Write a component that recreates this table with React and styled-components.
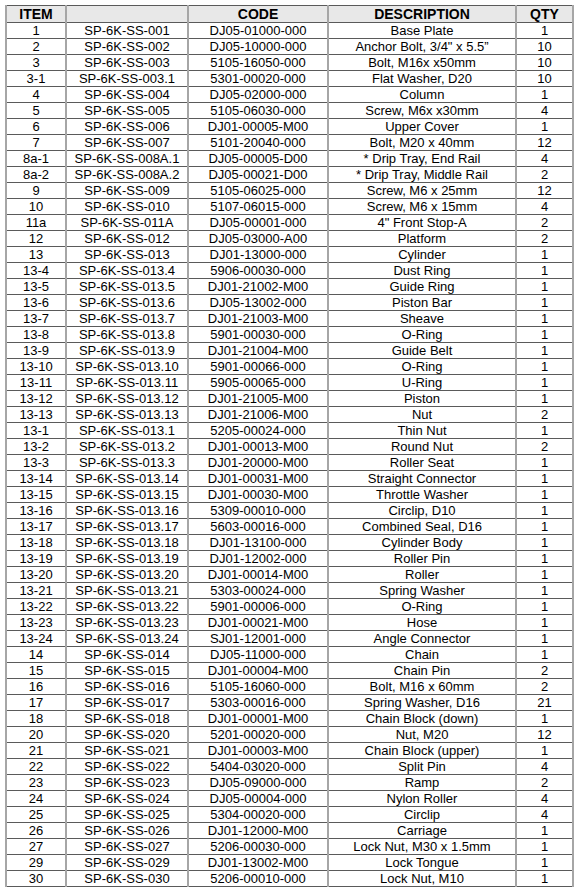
import React from "react";
import styled, { createGlobalStyle } from "styled-components";

const GlobalStyle = createGlobalStyle`
  html, body { margin: 0; padding: 0; background: #ffffff; }
  body { font-family: "Liberation Sans", Arial, Helvetica, sans-serif; color: #000; }
`;

const Page = styled.div`
  padding: 5px 0 0 5px;
`;

const Table = styled.table`
  border-collapse: collapse;
  table-layout: fixed;
  width: 567px;
`;

const Col = styled.col`
  width: ${(p) => p.$w}px;
`;

const HeadCell = styled.th`
  background: #e8e8e8;
  font-size: 14px;
  font-weight: 700;
  height: 16px;
  line-height: 16px;
  padding: 0;
  text-align: center;
  border-left: 2px solid #a6a6a6;
  border-right: 2px solid #a6a6a6;
  border-top: 1px solid #5a5a5a;
  border-bottom: 1px solid #5a5a5a;
  white-space: nowrap;
  overflow: hidden;
`;

const Cell = styled.td`
  font-size: 13px;
  height: 15px;
  line-height: 15px;
  padding: 0;
  text-align: center;
  border-left: 2px solid #a6a6a6;
  border-right: 2px solid #a6a6a6;
  border-top: 1px solid #5a5a5a;
  border-bottom: 1px solid #5a5a5a;
  white-space: nowrap;
  overflow: hidden;
`;

const rows = [
  ["1", "SP-6K-SS-001", "DJ05-01000-000", "Base Plate", "1"],
  ["2", "SP-6K-SS-002", "DJ05-10000-000", "Anchor Bolt, 3/4\" x 5.5\u201D", "10"],
  ["3", "SP-6K-SS-003", "5105-16050-000", "Bolt, M16x x50mm", "10"],
  ["3-1", "SP-6K-SS-003.1", "5301-00020-000", "Flat Washer, D20", "10"],
  ["4", "SP-6K-SS-004", "DJ05-02000-000", "Column", "1"],
  ["5", "SP-6K-SS-005", "5105-06030-000", "Screw, M6x x30mm", "4"],
  ["6", "SP-6K-SS-006", "DJ01-00005-M00", "Upper Cover", "1"],
  ["7", "SP-6K-SS-007", "5101-20040-000", "Bolt, M20 x 40mm", "12"],
  ["8a-1", "SP-6K-SS-008A.1", "DJ05-00005-D00", "* Drip Tray, End Rail", "4"],
  ["8a-2", "SP-6K-SS-008A.2", "DJ05-00021-D00", "* Drip Tray, Middle Rail", "2"],
  ["9", "SP-6K-SS-009", "5105-06025-000", "Screw, M6 x 25mm", "12"],
  ["10", "SP-6K-SS-010", "5107-06015-000", "Screw, M6 x 15mm", "4"],
  ["11a", "SP-6K-SS-011A", "DJ05-00001-000", "4\" Front Stop-A", "2"],
  ["12", "SP-6K-SS-012", "DJ05-03000-A00", "Platform", "2"],
  ["13", "SP-6K-SS-013", "DJ01-13000-000", "Cylinder", "1"],
  ["13-4", "SP-6K-SS-013.4", "5906-00030-000", "Dust Ring", "1"],
  ["13-5", "SP-6K-SS-013.5", "DJ01-21002-M00", "Guide Ring", "1"],
  ["13-6", "SP-6K-SS-013.6", "DJ05-13002-000", "Piston Bar", "1"],
  ["13-7", "SP-6K-SS-013.7", "DJ01-21003-M00", "Sheave", "1"],
  ["13-8", "SP-6K-SS-013.8", "5901-00030-000", "O-Ring", "1"],
  ["13-9", "SP-6K-SS-013.9", "DJ01-21004-M00", "Guide Belt", "1"],
  ["13-10", "SP-6K-SS-013.10", "5901-00066-000", "O-Ring", "1"],
  ["13-11", "SP-6K-SS-013.11", "5905-00065-000", "U-Ring", "1"],
  ["13-12", "SP-6K-SS-013.12", "DJ01-21005-M00", "Piston", "1"],
  ["13-13", "SP-6K-SS-013.13", "DJ01-21006-M00", "Nut", "2"],
  ["13-1", "SP-6K-SS-013.1", "5205-00024-000", "Thin Nut", "1"],
  ["13-2", "SP-6K-SS-013.2", "DJ01-00013-M00", "Round Nut", "2"],
  ["13-3", "SP-6K-SS-013.3", "DJ01-20000-M00", "Roller Seat", "1"],
  ["13-14", "SP-6K-SS-013.14", "DJ01-00031-M00", "Straight Connector", "1"],
  ["13-15", "SP-6K-SS-013.15", "DJ01-00030-M00", "Throttle Washer", "1"],
  ["13-16", "SP-6K-SS-013.16", "5309-00010-000", "Circlip, D10", "1"],
  ["13-17", "SP-6K-SS-013.17", "5603-00016-000", "Combined Seal, D16", "1"],
  ["13-18", "SP-6K-SS-013.18", "DJ01-13100-000", "Cylinder Body", "1"],
  ["13-19", "SP-6K-SS-013.19", "DJ01-12002-000", "Roller Pin", "1"],
  ["13-20", "SP-6K-SS-013.20", "DJ01-00014-M00", "Roller", "1"],
  ["13-21", "SP-6K-SS-013.21", "5303-00024-000", "Spring Washer", "1"],
  ["13-22", "SP-6K-SS-013.22", "5901-00006-000", "O-Ring", "1"],
  ["13-23", "SP-6K-SS-013.23", "DJ01-00021-M00", "Hose", "1"],
  ["13-24", "SP-6K-SS-013.24", "SJ01-12001-000", "Angle Connector", "1"],
  ["14", "SP-6K-SS-014", "DJ05-11000-000", "Chain", "1"],
  ["15", "SP-6K-SS-015", "DJ01-00004-M00", "Chain Pin", "2"],
  ["16", "SP-6K-SS-016", "5105-16060-000", "Bolt, M16 x 60mm", "2"],
  ["17", "SP-6K-SS-017", "5303-00016-000", "Spring Washer, D16", "21"],
  ["18", "SP-6K-SS-018", "DJ01-00001-M00", "Chain Block (down)", "1"],
  ["20", "SP-6K-SS-020", "5201-00020-000", "Nut, M20", "12"],
  ["21", "SP-6K-SS-021", "DJ01-00003-M00", "Chain Block (upper)", "1"],
  ["22", "SP-6K-SS-022", "5404-03020-000", "Split Pin", "4"],
  ["23", "SP-6K-SS-023", "DJ05-09000-000", "Ramp", "2"],
  ["24", "SP-6K-SS-024", "DJ05-00004-000", "Nylon Roller", "4"],
  ["25", "SP-6K-SS-025", "5304-00020-000", "Circlip", "4"],
  ["26", "SP-6K-SS-026", "DJ01-12000-M00", "Carriage", "1"],
  ["27", "SP-6K-SS-027", "5206-00030-000", "Lock Nut, M30 x 1.5mm", "1"],
  ["29", "SP-6K-SS-029", "DJ01-13002-M00", "Lock Tongue", "1"],
  ["30", "SP-6K-SS-030", "5206-00010-000", "Lock Nut, M10", "1"],
];

const widths = [60, 122, 140, 188, 57];

export default function App() {
  return (
    <>
      <GlobalStyle />
      <Page>
        <Table>
          <colgroup>
            {widths.map((w, i) => (
              <Col key={i} $w={w} />
            ))}
          </colgroup>
          <thead>
            <tr>
              <HeadCell>ITEM</HeadCell>
              <HeadCell></HeadCell>
              <HeadCell>CODE</HeadCell>
              <HeadCell>DESCRIPTION</HeadCell>
              <HeadCell>QTY</HeadCell>
            </tr>
          </thead>
          <tbody>
            {rows.map((r, i) => (
              <tr key={i}>
                {r.map((c, j) => (
                  <Cell key={j}>{c}</Cell>
                ))}
              </tr>
            ))}
          </tbody>
        </Table>
      </Page>
    </>
  );
}
